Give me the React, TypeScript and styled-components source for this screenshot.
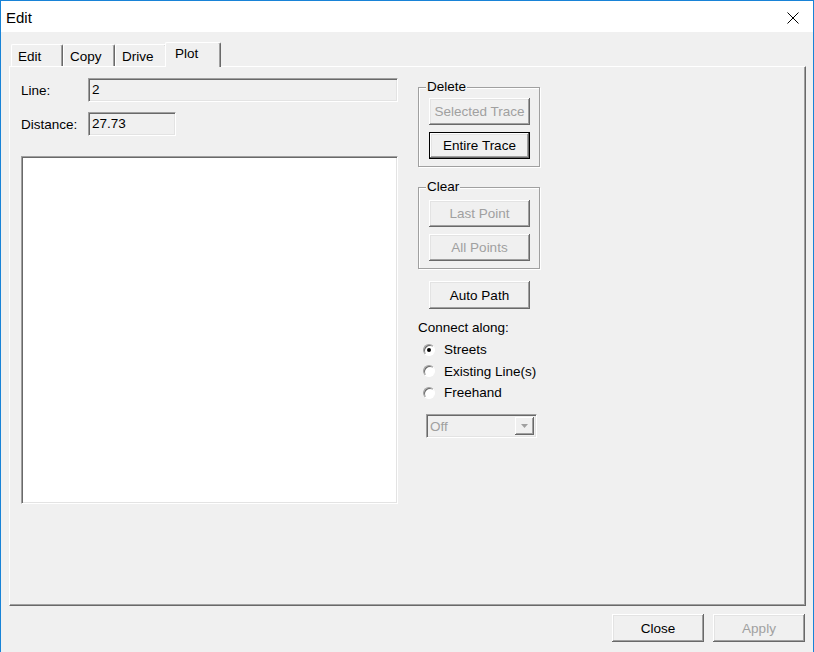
import React, { useState } from 'react';
import styled, { createGlobalStyle } from 'styled-components';

const GlobalStyle = createGlobalStyle`
  html, body {
    margin: 0;
    padding: 0;
    background: #f0f0f0;
  }
  * {
    box-sizing: border-box;
  }
`;

const tabs = ['Edit', 'Copy', 'Drive', 'Plot'];
const modes = ['Streets', 'Existing Line(s)', 'Freehand'];

const App: React.FC = () => {
  const [activeTab, setActiveTab] = useState('Plot');
  const [mode, setMode] = useState('Streets');

  return (
    <>
      <GlobalStyle />
      <Window>
        <TitleBar>
          <Title>Edit</Title>
          <CloseBox>
            <svg width="12" height="12" viewBox="0 0 12 12">
              <path d="M0.5 0.5 L11.5 11.5 M11.5 0.5 L0.5 11.5" stroke="#000" strokeWidth="1" fill="none" />
            </svg>
          </CloseBox>
        </TitleBar>

        <Body>
          <TabStrip>
            {tabs.map(t => (
              <Tab key={t} $active={t === activeTab} onClick={() => setActiveTab(t)}>
                {t}
              </Tab>
            ))}
          </TabStrip>

          <Panel>
            <LeftColumn>
              <FieldRow>
                <Label>Line:</Label>
                <ReadOnlyField $width={310}>2</ReadOnlyField>
              </FieldRow>
              <FieldRow>
                <Label>Distance:</Label>
                <ReadOnlyField $width={88}>27.73</ReadOnlyField>
              </FieldRow>
              <Canvas />
            </LeftColumn>

            <RightColumn>
              <Group>
                <Legend>Delete</Legend>
                <ButtonStack>
                  <Button disabled>Selected Trace</Button>
                  <Button $default>Entire Trace</Button>
                </ButtonStack>
              </Group>

              <Group $gap>
                <Legend>Clear</Legend>
                <ButtonStack>
                  <Button disabled>Last Point</Button>
                  <Button disabled>All Points</Button>
                </ButtonStack>
              </Group>

              <AutoPathButton>Auto Path</AutoPathButton>

              <Caption>Connect along:</Caption>
              <RadioList>
                {modes.map(m => (
                  <RadioRow key={m} onClick={() => setMode(m)}>
                    <RadioCircle $checked={m === mode} />
                    <span>{m}</span>
                  </RadioRow>
                ))}
              </RadioList>

              <Combo>
                <ComboText>Off</ComboText>
                <ComboArrow>
                  <svg width="7" height="4" viewBox="0 0 7 4">
                    <path d="M0 0 L7 0 L3.5 4 Z" fill="#a0a0a0" />
                  </svg>
                </ComboArrow>
              </Combo>
            </RightColumn>
          </Panel>

          <Footer>
            <DialogButton>Close</DialogButton>
            <DialogButton disabled>Apply</DialogButton>
          </Footer>
        </Body>
      </Window>
    </>
  );
};

const Window = styled.div`
  width: 814px;
  height: 652px;
  display: flex;
  flex-direction: column;
  background: #f0f0f0;
  border-left: 1px solid #1883d7;
  border-right: 1px solid #1883d7;
  border-top: 1px solid #1883d7;
  font-family: "Liberation Sans", Arial, sans-serif;
  font-size: 13.5px;
  color: #000;
  overflow: hidden;
`;

const TitleBar = styled.div`
  height: 31px;
  background: #fff;
  display: flex;
  align-items: center;
  justify-content: space-between;
  padding: 0 14px 0 5px;
  flex-shrink: 0;
`;

const Title = styled.span`
  font-size: 15px;
  padding-top: 1px;
`;

const CloseBox = styled.div`
  display: flex;
  align-items: center;
  padding-top: 2px;
`;

const Body = styled.div`
  flex: 1;
  display: flex;
  flex-direction: column;
  padding: 10px 7px 0 8px;
`;

const TabStrip = styled.div`
  height: 24px;
  display: flex;
  align-items: flex-end;
  padding-left: 2px;
  position: relative;
  z-index: 1;
`;

const Tab = styled.div<{ $active?: boolean }>`
  width: ${p => (p.$active ? 56 : 52)}px;
  height: ${p => (p.$active ? 25 : 22)}px;
  margin: ${p => (p.$active ? '0 -2px -1px -2px' : '0')};
  padding: ${p => (p.$active ? '3px 0 0 9px' : '4px 0 0 6px')};
  background: #f0f0f0;
  border-top: 1px solid #fff;
  border-left: 1px solid #fff;
  border-right: 1px solid #696969;
  box-shadow: inset -1px 0 0 #a0a0a0;
  border-radius: 2px 2px 0 0;
  cursor: default;
  white-space: nowrap;
`;

const Panel = styled.div`
  height: 540px;
  display: flex;
  gap: 20px;
  padding: 11px 0 0 11px;
  border-top: 1px solid #fff;
  border-left: 1px solid #fff;
  border-right: 1px solid #696969;
  border-bottom: 1px solid #696969;
  box-shadow: inset -1px -1px 0 #a0a0a0;
`;

const LeftColumn = styled.div`
  width: 377px;
  display: flex;
  flex-direction: column;
`;

const FieldRow = styled.div`
  display: flex;
  align-items: center;
  height: 24px;
  margin-bottom: 10px;
`;

const Label = styled.div`
  width: 67px;
`;

const ReadOnlyField = styled.div<{ $width: number }>`
  width: ${p => p.$width}px;
  height: 24px;
  padding: 3px 0 0 3px;
  background: #f0f0f0;
  border-top: 1px solid #a0a0a0;
  border-left: 1px solid #a0a0a0;
  border-right: 1px solid #fff;
  border-bottom: 1px solid #fff;
  box-shadow: inset 1px 1px 0 #696969, inset -1px -1px 0 #e3e3e3;
`;

const Canvas = styled.div`
  margin-top: 10px;
  width: 377px;
  height: 348px;
  flex-shrink: 0;
  background: #fff;
  border-top: 1px solid #a0a0a0;
  border-left: 1px solid #a0a0a0;
  border-right: 1px solid #fff;
  border-bottom: 1px solid #fff;
  box-shadow: inset 1px 1px 0 #696969, inset -1px -1px 0 #e3e3e3;
`;

const RightColumn = styled.div`
  width: 122px;
  display: flex;
  flex-direction: column;
  padding-top: 1px;
`;

const Group = styled.fieldset<{ $gap?: boolean }>`
  margin: ${p => (p.$gap ? '12px' : '0')} 0 0 0;
  padding: ${p => (p.$gap ? '5px' : '3px')} 10px 7px 10px;
  border: 1px solid #a0a0a0;
  box-shadow: inset 1px 1px 0 #fff, 1px 1px 0 #fff;
  min-width: 0;
`;

const Legend = styled.legend`
  margin-left: -3px;
  padding: 0 1px;
  line-height: 16px;
  background: #f0f0f0;
`;

const ButtonStack = styled.div`
  display: flex;
  flex-direction: column;
  gap: 7px;
`;

const Button = styled.button<{ $default?: boolean }>`
  width: 101px;
  height: 27px;
  padding: 0;
  font-family: inherit;
  font-size: 13.5px;
  color: #000;
  background: #f0f0f0;
  border: ${p => (p.$default ? '1px solid #000' : 'none')};
  box-shadow: inset -1px -1px 0 #696969, inset 1px 1px 0 #fff,
    inset -2px -2px 0 #a0a0a0, inset 2px 2px 0 #e3e3e3;
  cursor: default;
  white-space: nowrap;

  &:disabled {
    color: #a0a0a0;
  }
`;

const AutoPathButton = styled(Button)`
  margin: 12px 0 0 11px;
  height: 28px;
`;

const Caption = styled.div`
  margin-top: 11px;
  line-height: 16px;
  white-space: nowrap;
`;

const RadioList = styled.div`
  display: flex;
  flex-direction: column;
  margin-top: 5px;
  gap: 4.5px;
`;

const RadioRow = styled.div`
  display: flex;
  align-items: center;
  height: 17px;
  padding-left: 5px;
  gap: 9px;
  white-space: nowrap;
  cursor: default;
`;

const RadioCircle = styled.span<{ $checked?: boolean }>`
  width: 12px;
  height: 12px;
  border-radius: 50%;
  flex-shrink: 0;
  background: #fff;
  border: 1px solid;
  border-color: #a0a0a0 #fff #fff #a0a0a0;
  box-shadow: inset 1px 1px 0 #696969;
  display: flex;
  align-items: center;
  justify-content: center;

  &::after {
    content: '';
    width: 4px;
    height: 4px;
    border-radius: 50%;
    background: ${p => (p.$checked ? '#000' : 'transparent')};
  }
`;

const Combo = styled.div`
  margin: 13px 0 0 8px;
  width: 111px;
  height: 24px;
  flex-shrink: 0;
  display: flex;
  align-items: stretch;
  background: #f0f0f0;
  border-top: 1px solid #a0a0a0;
  border-left: 1px solid #a0a0a0;
  border-right: 1px solid #fff;
  border-bottom: 1px solid #fff;
  box-shadow: inset 1px 1px 0 #696969, inset -1px -1px 0 #e3e3e3;
  padding: 2px;
`;

const ComboText = styled.div`
  flex: 1;
  color: #a0a0a0;
  padding: 2px 0 0 1px;
`;

const ComboArrow = styled.div`
  width: 19px;
  display: flex;
  align-items: center;
  justify-content: center;
  background: #f0f0f0;
  box-shadow: inset -1px -1px 0 #696969, inset 1px 1px 0 #fff,
    inset -2px -2px 0 #a0a0a0;
`;

const Footer = styled.div`
  display: flex;
  justify-content: flex-end;
  gap: 9px;
  padding: 8px 1px 0 0;
`;

const DialogButton = styled(Button)`
  width: 92px;
  height: 28px;
`;

export default App;
